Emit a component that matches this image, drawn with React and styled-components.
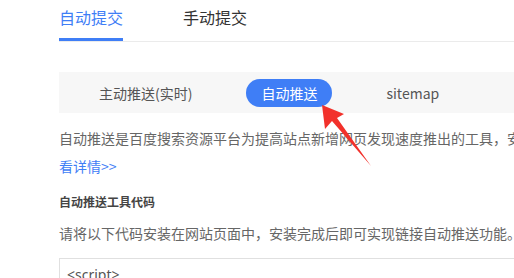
import React from "react";
import styled, { createGlobalStyle } from "styled-components";

const GlobalStyle = createGlobalStyle`
  html, body {
    margin: 0;
    padding: 0;
    background: #fff;
  }
  body {
    font-family: "Noto Sans CJK SC", "Noto Sans", sans-serif;
  }
`;

const Page = styled.div`
  position: relative;
  width: 514px;
  height: 278px;
  overflow: hidden;
  padding-left: 59px;
  box-sizing: border-box;
`;

const TabBar = styled.div`
  display: flex;
  gap: 60px;
  border-bottom: 1px solid #ebebeb;
  width: 600px;
`;

const Tab = styled.div`
  padding-top: 5px;
  height: 33px;
  line-height: 24px;
  font-size: 16px;
  color: ${(p) => (p.active ? "#3f7ef6" : "#333")};
  border-bottom: 3px solid ${(p) => (p.active ? "#3f7ef6" : "transparent")};
  cursor: pointer;
`;

const Segments = styled.div`
  display: flex;
  align-items: center;
  gap: 39px;
  margin-top: 30px;
  height: 41px;
  padding-left: 25px;
  background: #f7f7f7;
  width: 600px;
`;

const Segment = styled.div`
  height: 28px;
  line-height: 28px;
  padding: 0 15px;
  border-radius: 14px;
  font-size: 14px;
  color: ${(p) => (p.active ? "#fff" : "#555")};
  background: ${(p) => (p.active ? "#3f7ef6" : "transparent")};
  white-space: nowrap;
`;

const Intro = styled.div`
  margin-top: 11px;
  font-size: 14px;
  line-height: 28px;
  color: #666;
  white-space: nowrap;
`;

const Link = styled.a`
  display: block;
  color: #3f7ef6;
  text-decoration: none;
`;

const Heading = styled.div`
  margin-top: 12px;
  font-size: 12px;
  font-weight: bold;
  line-height: 20px;
  color: #444;
`;

const Note = styled.div`
  margin-top: 7px;
  font-size: 14px;
  line-height: 28px;
  color: #666;
  white-space: nowrap;
`;

const CodeBox = styled.pre`
  margin: 11px 0 0;
  width: 600px;
  padding: 6px 7px;
  border: 1px solid #e0e0e0;
  font-family: "Noto Sans", "Noto Sans CJK SC", sans-serif;
  font-size: 14px;
  line-height: 20px;
  color: #555;
`;

const Arrow = styled.svg`
  position: absolute;
  left: 0;
  top: 0;
  pointer-events: none;
`;

const segments = ["主动推送(实时)", "自动推送", "sitemap"];

export default function App() {
  return (
    <>
      <GlobalStyle />
      <Page>
        <TabBar>
          <Tab active>自动提交</Tab>
          <Tab>手动提交</Tab>
        </TabBar>
        <Segments>
          {segments.map((s) => (
            <Segment key={s} active={s === "自动推送"}>
              {s}
            </Segment>
          ))}
        </Segments>
        <Intro>
          自动推送是百度搜索资源平台为提高站点新增网页发现速度推出的工具，安装自动推送代码的网页，在页面被访问时，页面URL将立即被推送给百度。
          <Link href="#">看详情&gt;&gt;</Link>
        </Intro>
        <Heading>自动推送工具代码</Heading>
        <Note>请将以下代码安装在网站页面中，安装完成后即可实现链接自动推送功能。</Note>
        <CodeBox>{"<script>\n(function(){"}</CodeBox>
        <Arrow width="514" height="278" viewBox="0 0 514 278">
          <polygon
            points="322,105 344,114 337,118 371,166 332,121 325,129"
            fill="#f2312b"
          />
        </Arrow>
      </Page>
    </>
  );
}
